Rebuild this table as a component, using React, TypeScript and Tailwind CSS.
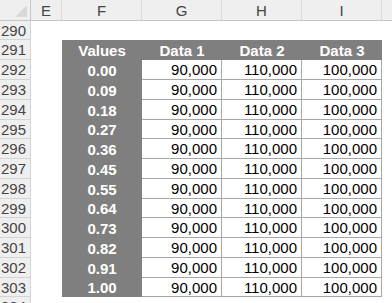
import React from 'react';

const values = ['0.00', '0.09', '0.18', '0.27', '0.36', '0.45', '0.55', '0.64', '0.73', '0.82', '0.91', '1.00'];
// row heights follow the sheet: 20,20,20,19 repeating
const heights = ['h-[20px]', 'h-[20px]', 'h-[20px]', 'h-[19px]'];

const RowHead: React.FC<{ n: number }> = ({ n }) => (
  <div className="w-[31px] shrink-0 h-full bg-[#efefef] border-r border-b border-[#d4d4d4] text-[#444] pl-[1px] flex items-center">
    {n}
  </div>
);

const App: React.FC = () => {
  return (
    <div className="w-[392px] h-[303px] overflow-hidden bg-white text-[15px] leading-none font-['Liberation_Sans',Arial,sans-serif]">
      {/* column letters */}
      <div className="flex h-[21px] bg-[#efefef] border-b border-[#c6c6c6] text-[#444]">
        <div className="w-[31px] shrink-0 border-r border-[#c6c6c6] relative overflow-hidden">
          <div className="absolute right-[3px] bottom-[3px] w-0 h-0 border-l-[12px] border-l-transparent border-b-[12px] border-b-[#d9d9d9]" />
        </div>
        <div className="w-[31px] shrink-0 border-r border-[#d9d9d9] flex items-center justify-center">E</div>
        <div className="w-[80px] shrink-0 border-r border-[#d9d9d9] flex items-center justify-center">F</div>
        <div className="w-[80px] shrink-0 border-r border-[#d9d9d9] flex items-center justify-center">G</div>
        <div className="w-[80px] shrink-0 border-r border-[#d9d9d9] flex items-center justify-center">H</div>
        <div className="w-[80px] shrink-0 border-r border-[#d9d9d9] flex items-center justify-center">I</div>
        <div className="flex-1" />
      </div>

      {/* 290 */}
      <div className="flex h-[19px]">
        <RowHead n={290} />
      </div>

      {/* 291 header row */}
      <div className="flex h-[20px]">
        <RowHead n={291} />
        <div className="w-[31px] shrink-0" />
        <div className="w-[320px] shrink-0 flex bg-[#7f7f7f] text-white font-bold">
          <div className="w-[80px] flex items-center justify-center">Values</div>
          <div className="w-[80px] flex items-center justify-center">Data 1</div>
          <div className="w-[80px] flex items-center justify-center">Data 2</div>
          <div className="w-[80px] flex items-center justify-center">Data 3</div>
        </div>
      </div>

      {values.map((v, i) => (
        <div key={v} className={`flex ${heights[i % 4]}`}>
          <RowHead n={292 + i} />
          <div className="w-[31px] shrink-0" />
          <div className="w-[80px] shrink-0 bg-[#7f7f7f] text-white font-bold flex items-center justify-center">{v}</div>
          <div className="w-[80px] shrink-0 bg-white border-r border-b border-[#a6a6a6] flex items-center justify-end pr-[4px] text-black">90,000</div>
          <div className="w-[80px] shrink-0 bg-white border-r border-b border-[#a6a6a6] flex items-center justify-end pr-[4px] text-black">110,000</div>
          <div className="w-[80px] shrink-0 bg-white border-r border-b border-[#a6a6a6] flex items-center justify-end pr-[4px] text-black">100,000</div>
        </div>
      ))}

      {/* 304 */}
      <div className="flex h-[20px]">
        <RowHead n={304} />
      </div>
    </div>
  );
};

export default App;
